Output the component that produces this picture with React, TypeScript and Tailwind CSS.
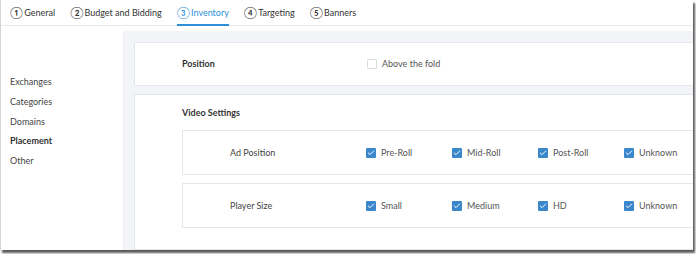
import { Check } from 'lucide-react';

const tabs = [
  { n: '①', label: 'General' },
  { n: '②', label: 'Budget and Bidding' },
  { n: '③', label: 'Inventory', active: true },
  { n: '④', label: 'Targeting' },
  { n: '⑤', label: 'Banners' },
];

const sideItems = ['Exchanges', 'Categories', 'Domains', 'Placement', 'Other'];

function Box({ checked }: { checked?: boolean }) {
  if (!checked) {
    return <span className="h-[10px] w-[10px] shrink-0 rounded-[1px] border border-[#d9dce3] bg-white" />;
  }
  return (
    <span className="grid h-[10px] w-[10px] shrink-0 place-items-center rounded-[1px] bg-[#3b87cc] text-white">
      <Check className="h-[8px] w-[8px]" strokeWidth={3} />
    </span>
  );
}

function Option({ label, checked }: { label: string; checked?: boolean }) {
  return (
    <div className="flex w-[86px] shrink-0 items-center gap-[5px]">
      <Box checked={checked} />
      <span className="text-[#555]">{label}</span>
    </div>
  );
}

function Row({ label, options }: { label: string; options: string[] }) {
  return (
    <div className="flex h-[45px] w-[560px] shrink-0 items-center border border-[#e4e6ed] bg-white pl-[47px]">
      <span className="w-[136px] shrink-0 text-[#444]">{label}</span>
      {options.map((o) => (
        <Option key={o} label={o} checked />
      ))}
    </div>
  );
}

export default function App() {
  return (
    <div className="h-[254px] w-[696px] overflow-hidden bg-white" style={{ fontFamily: 'Lato, "Open Sans", sans-serif' }}>
      <div className="flex h-[250px] w-[693px] flex-col overflow-hidden border-l border-[#d4d4d4] bg-white text-[9px] shadow-[2px_3px_2px_rgba(0,0,0,0.65)]">
        {/* Tabs */}
        <div className="flex h-[26px] shrink-0 items-end gap-[15px] border-b border-[#e8e9ee] pl-[9px]">
          {tabs.map((t) => (
            <div
              key={t.label}
              className={
                t.active
                  ? 'flex h-[26px] items-center gap-[1px] border-b-2 border-[#2f8fd8] pt-[2px] text-[#2f8fd8] -mb-px'
                  : 'flex h-[26px] items-center gap-[1px] pt-[2px] text-[#333]'
              }
            >
              <span className="text-[12px] leading-none">{t.n}</span>
              <span>{t.label}</span>
            </div>
          ))}
        </div>

        <div className="flex min-h-0 flex-1">
          {/* Sidebar */}
          <div className="flex w-[122px] shrink-0 flex-col gap-[6px] pl-[9px] pt-[49px] text-[#444]">
            {sideItems.map((s) => (
              <span key={s} className={s === 'Placement' ? 'font-bold text-[#333] leading-[13.75px]' : 'leading-[13.75px]'}>
                {s}
              </span>
            ))}
          </div>

          {/* Content */}
          <div className="mt-[5px] flex min-w-0 flex-1 flex-col gap-[8px] border-l border-[#eceef2] bg-[#f3f4f8] pl-[10px] pt-[11px]">
            <div className="flex h-[44px] w-[620px] shrink-0 items-center border border-[#e4e6ed] bg-white pl-[47px]">
              <span className="w-[185px] shrink-0 font-bold text-[#333]">Position</span>
              <Option label="Above the fold" />
            </div>

            <div className="flex w-[620px] shrink-0 flex-col border border-[#e4e6ed] bg-white pb-[21px] pl-[47px] pt-[11px]">
              <span className="font-bold leading-[14px] text-[#333]">Video Settings</span>
              <div className="mt-[10px] flex flex-col gap-[8px]">
                <Row label="Ad Position" options={['Pre-Roll', 'Mid-Roll', 'Post-Roll', 'Unknown']} />
                <Row label="Player Size" options={['Small', 'Medium', 'HD', 'Unknown']} />
              </div>
            </div>
          </div>
        </div>
      </div>
    </div>
  );
}
